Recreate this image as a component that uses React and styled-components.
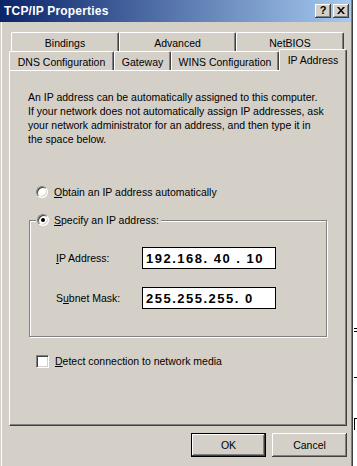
import React from "react";
import styled, { createGlobalStyle, css } from "styled-components";

const GlobalStyle = createGlobalStyle`
  html, body {
    margin: 0;
    padding: 0;
    background: #fff;
  }
  body {
    font-family: "Liberation Sans", Arial, sans-serif;
    font-size: 10.5px;
    color: #000;
  }
`;

const Page = styled.div`
  display: flex;
  width: 357px;
  height: 466px;
  overflow: hidden;
`;

const Dialog = styled.div`
  width: 353px;
  height: 466px;
  flex-shrink: 0;
  box-sizing: border-box;
  background: #d4d0c8;
  display: flex;
  flex-direction: column;
  box-shadow: inset 1px 0 #d4d0c8, inset 2px 0 #fff, inset -1px 0 #404040,
    inset -2px 0 #808080;
`;

const BehindStrip = styled.div`
  flex: 1;
  background:
    linear-gradient(#000, #000) 1px 328px / 3px 1px no-repeat,
    linear-gradient(#000, #000) 1px 331px / 3px 1px no-repeat,
    linear-gradient(#000, #000) 1px 377px / 3px 1px no-repeat,
    linear-gradient(#000, #000) 1px 418px / 3px 1px no-repeat,
    linear-gradient(#000, #000) 1px 418px / 1px 12px no-repeat,
    #fff;
`;

const TitleBar = styled.div`
  height: 22px;
  margin-right: 2px;
  padding: 0 2px 0 4px;
  display: flex;
  align-items: center;
  background: linear-gradient(to right, #0a246a, #a6caf0);
`;

const Title = styled.span`
  color: #fff;
  font-weight: bold;
  font-size: 12px;
  letter-spacing: 0.2px;
`;

const TitleButtons = styled.div`
  margin-left: auto;
  display: flex;
  gap: 2px;
`;

const raised = css`
  background: #d4d0c8;
  box-shadow: inset -1px -1px #404040, inset 1px 1px #fff,
    inset -2px -2px #808080, inset 2px 2px #d4d0c8;
`;

const CaptionButton = styled.div`
  ${raised};
  width: 16px;
  height: 14px;
  box-sizing: border-box;
  display: flex;
  align-items: center;
  justify-content: center;
  font-weight: bold;
  font-size: 11px;
  line-height: 1;
  padding-bottom: 1px;
`;

const Body = styled.div`
  padding-top: 10px;
  display: flex;
  flex-direction: column;
`;

const TabRow = styled.div`
  display: flex;
  align-items: flex-end;
  height: 19px;
  padding-left: ${(p) => p.$offset}px;
`;

const Tab = styled.div`
  width: ${(p) => p.$w}px;
  height: 19px;
  box-sizing: border-box;
  flex-shrink: 0;
  display: flex;
  align-items: center;
  justify-content: center;
  background: #d4d0c8;
  border-top: 1px solid #fff;
  border-left: 1px solid #fff;
  border-right: 1px solid #404040;
  border-radius: 2px 2px 0 0;
  box-shadow: inset -1px 0 #808080;
  padding-top: 1px;
  white-space: nowrap;

  ${(p) =>
    p.$active &&
    css`
      height: 22px;
      margin-bottom: -1px;
      position: relative;
      z-index: 1;
      padding-bottom: 3px;
    `}
`;

const Panel = styled.div`
  margin-left: 9px;
  width: 338px;
  height: 356px;
  box-sizing: border-box;
  border-top: 1px solid #fff;
  border-left: 1px solid #fff;
  border-right: 1px solid #404040;
  border-bottom: 1px solid #404040;
  box-shadow: inset -1px -1px #808080;
  padding: 19px 18px 0;
  display: flex;
  flex-direction: column;
`;

const Description = styled.p`
  margin: 0;
  line-height: 14px;
  white-space: nowrap;
`;

const OptionRow = styled.div`
  display: flex;
  align-items: center;
  gap: 6px;
  height: 14px;
  margin-top: ${(p) => p.$top}px;
  padding-left: 8px;
`;

const Radio = styled.span`
  width: 12px;
  height: 12px;
  box-sizing: border-box;
  flex-shrink: 0;
  border-radius: 50%;
  border: 1px solid;
  border-color: #808080 #fff #fff #808080;
  background: #fff;
  box-shadow: inset 1px 1px #404040, inset -1px -1px #d4d0c8;
  display: flex;
  align-items: center;
  justify-content: center;

  &::after {
    content: "";
    width: 4px;
    height: 4px;
    border-radius: 50%;
    background: ${(p) => (p.$checked ? "#000" : "transparent")};
  }
`;

const CheckBox = styled.span`
  width: 13px;
  height: 13px;
  box-sizing: border-box;
  flex-shrink: 0;
  border: 1px solid;
  border-color: #808080 #fff #fff #808080;
  background: #fff;
  box-shadow: inset 1px 1px #404040, inset -1px -1px #d4d0c8;
`;

const GroupBox = styled.fieldset`
  margin: 14px 1px 0;
  padding: 20px 0 27px;
  border: 1px solid #808080;
  box-shadow: inset 1px 1px #fff, 1px 1px #fff;
  display: flex;
  flex-direction: column;
  gap: 18px;
  min-width: 0;
`;

const Legend = styled.legend`
  margin-left: 6px;
  padding: 0 2px 0 1px;
  background: #d4d0c8;
  display: flex;
  align-items: center;
  gap: 5px;
  line-height: 14px;
  height: 14px;
`;

const FieldRow = styled.div`
  display: flex;
  align-items: center;
  height: 22px;
  padding-left: 26px;
`;

const FieldLabel = styled.span`
  width: 86px;
  flex-shrink: 0;
`;

const IpBox = styled.div`
  width: 134px;
  height: 22px;
  box-sizing: border-box;
  border: 1px solid #000;
  background: #fff;
  padding-left: 3px;
  display: flex;
  align-items: center;
  font-weight: bold;
  font-size: 13px;
  letter-spacing: 1.5px;
  white-space: pre;
`;

const ButtonRow = styled.div`
  display: flex;
  justify-content: flex-end;
  gap: 6px;
  padding-right: 6px;
  margin-top: 7px;
`;

const Button = styled.button`
  ${raised};
  width: 75px;
  height: 24px;
  box-sizing: border-box;
  border: ${(p) => (p.$default ? "1px solid #000" : "none")};
  font: inherit;
  color: #000;
  padding: 0;
`;

const tabsBack = [
  { label: "Bindings", w: 108 },
  { label: "Advanced", w: 117 },
  { label: "NetBIOS", w: 108 },
];

const tabsFront = [
  { label: "DNS Configuration", w: 105 },
  { label: "Gateway", w: 57 },
  { label: "WINS Configuration", w: 108 },
  { label: "IP Address", w: 68, active: true },
];

const App = () => {
  return (
    <Page>
      <GlobalStyle />
      <Dialog>
        <TitleBar>
          <Title>TCP/IP Properties</Title>
          <TitleButtons>
            <CaptionButton>?</CaptionButton>
            <CaptionButton>
              <svg width="8" height="7" viewBox="0 0 8 7">
                <path
                  d="M0 0h2l2 2.5L6 0h2L5 3.5 8 7H6L4 4.5 2 7H0l3-3.5z"
                  fill="#000"
                />
              </svg>
            </CaptionButton>
          </TitleButtons>
        </TitleBar>

        <Body>
          <TabRow $offset={11}>
            {tabsBack.map((t) => (
              <Tab key={t.label} $w={t.w}>
                {t.label}
              </Tab>
            ))}
          </TabRow>
          <TabRow $offset={9}>
            {tabsFront.map((t) => (
              <Tab key={t.label} $w={t.w} $active={t.active}>
                {t.label}
              </Tab>
            ))}
          </TabRow>

          <Panel>
            <Description>
              An IP address can be automatically assigned to this computer.
              <br />
              If your network does not automatically assign IP addresses, ask
              <br />
              your network administrator for an address, and then type it in
              <br />
              the space below.
            </Description>

            <OptionRow $top={39}>
              <Radio />
              <span>
                <u>O</u>btain an IP address automatically
              </span>
            </OptionRow>

            <GroupBox>
              <Legend>
                <Radio $checked />
                <span>
                  <u>S</u>pecify an IP address:
                </span>
              </Legend>
              <FieldRow>
                <FieldLabel>
                  <u>I</u>P Address:
                </FieldLabel>
                <IpBox>{"192.168. 40 . 10"}</IpBox>
              </FieldRow>
              <FieldRow>
                <FieldLabel>
                  S<u>u</u>bnet Mask:
                </FieldLabel>
                <IpBox>{"255.255.255. 0"}</IpBox>
              </FieldRow>
            </GroupBox>

            <OptionRow $top={17}>
              <CheckBox />
              <span>
                <u>D</u>etect connection to network media
              </span>
            </OptionRow>
          </Panel>

          <ButtonRow>
            <Button $default>OK</Button>
            <Button>Cancel</Button>
          </ButtonRow>
        </Body>
      </Dialog>
      <BehindStrip />
    </Page>
  );
};

export default App;
